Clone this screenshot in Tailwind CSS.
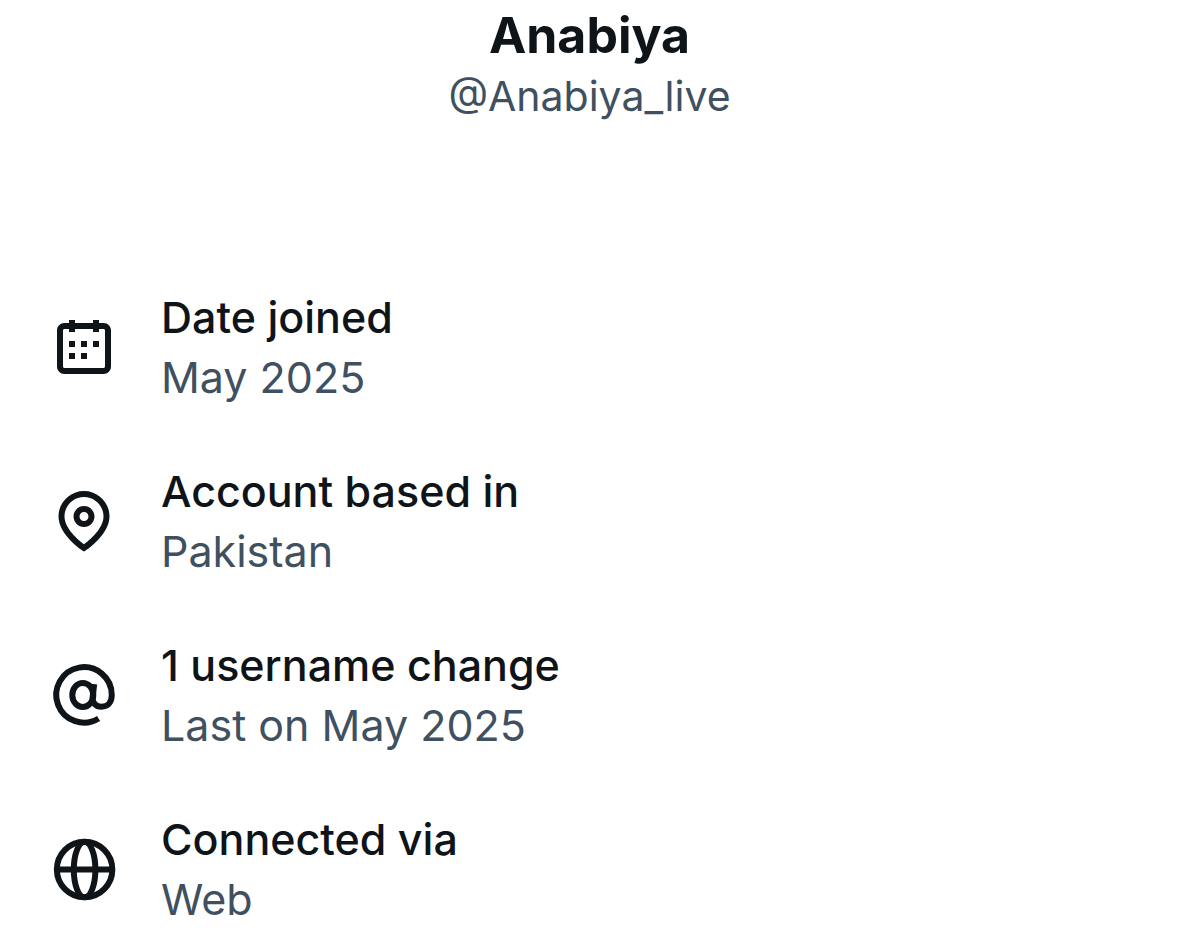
<!DOCTYPE html>
<html lang="en">
  <head>
    <title>About this account</title>
    <meta charset="utf-8"/>
    <meta name="viewport" content="width=device-width, initial-scale=1"/>
    <script src="https://cdn.jsdelivr.net/npm/@tailwindcss/browser@4"></script>
  </head>
  <body class="bg-white font-['Inter','Liberation_Sans',sans-serif] text-[#0f1419]">
    <main class="pt-1 pb-10">
      <header class="text-center leading-[60px]">
        <h1 class="text-[50px] leading-[62px] font-bold">Anabiya</h1>
        <p class="text-[41px] text-[#3f5060]">@Anabiya_live</p>
      </header>

      <ul class="mt-[161px] flex flex-col gap-[54px] px-12 text-[43px] leading-[60px]">
        <li class="flex items-center gap-[41px]">
          <svg class="size-[72px] shrink-0" viewBox="0 0 24 24" fill="currentColor" aria-hidden="true">
            <path d="M7 4V3h2v1h6V3h2v1h1.5C19.89 4 21 5.12 21 6.5v12c0 1.38-1.11 2.5-2.5 2.5h-13C4.12 21 3 19.88 3 18.5v-12C3 5.12 4.12 4 5.5 4H7zm0 2H5.5c-.27 0-.5.22-.5.5v12c0 .28.23.5.5.5h13c.28 0 .5-.22.5-.5v-12c0-.28-.22-.5-.5-.5H17v1h-2V6H9v1H7V6zm0 6h2v-2H7v2zm0 4h2v-2H7v2zm4-4h2v-2h-2v2zm0 4h2v-2h-2v2zm4-4h2v-2h-2v2z"/>
          </svg>
          <div>
            <h2 class="font-medium">Date joined</h2>
            <p class="text-[#3f5060]">May 2025</p>
          </div>
        </li>
        <li class="flex items-center gap-[41px]">
          <svg class="size-[72px] shrink-0" viewBox="0 0 24 24" fill="currentColor" aria-hidden="true">
            <path d="M12 7c-1.93 0-3.5 1.57-3.5 3.5S10.07 14 12 14s3.5-1.57 3.5-3.5S13.93 7 12 7zm0 5c-.827 0-1.5-.673-1.5-1.5S11.173 9 12 9s1.5.673 1.5 1.5S12.827 12 12 12zm0-10c-4.687 0-8.5 3.813-8.5 8.5 0 5.967 7.621 11.116 7.945 11.332l.555.37.555-.37c.324-.216 7.945-5.365 7.945-11.332C20.5 5.813 16.687 2 12 2zm0 17.77c-1.665-1.241-6.5-5.196-6.5-9.27C5.5 6.916 8.416 4 12 4s6.5 2.916 6.5 6.5c0 4.073-4.835 8.028-6.5 9.27z"/>
          </svg>
          <div>
            <h2 class="font-medium">Account based in</h2>
            <p class="text-[#3f5060]">Pakistan</p>
          </div>
        </li>
        <li class="flex items-center gap-[41px]">
          <svg class="size-[72px] shrink-0" viewBox="0 0 24 24" fill="none" stroke="currentColor" stroke-width="2" aria-hidden="true">
            <ellipse cx="11.6" cy="12" rx="3.5" ry="4"/>
            <path d="M15.4 8.4l-.5 4.1c-.3 2.2 1.2 3.4 2.9 3.4 2.3 0 3.45-1.6 3.45-3.9a9.25 9.25 0 1 0-4.4 7.85"/>
          </svg>
          <div>
            <h2 class="font-medium">1 username change</h2>
            <p class="text-[#3f5060]">Last on May 2025</p>
          </div>
        </li>
        <li class="flex items-center gap-[41px]">
          <svg class="size-[72px] shrink-0" viewBox="0 0 24 24" fill="none" stroke="currentColor" stroke-width="2" aria-hidden="true">
            <circle cx="12.2" cy="12.2" r="9.25"/>
            <ellipse cx="12.2" cy="12.2" rx="3.6" ry="9.25"/>
            <path d="M3 12.2h18.4"/>
          </svg>
          <div>
            <h2 class="font-medium">Connected via</h2>
            <p class="text-[#3f5060]">Web</p>
          </div>
        </li>
      </ul>
    </main>
  </body>
</html>
